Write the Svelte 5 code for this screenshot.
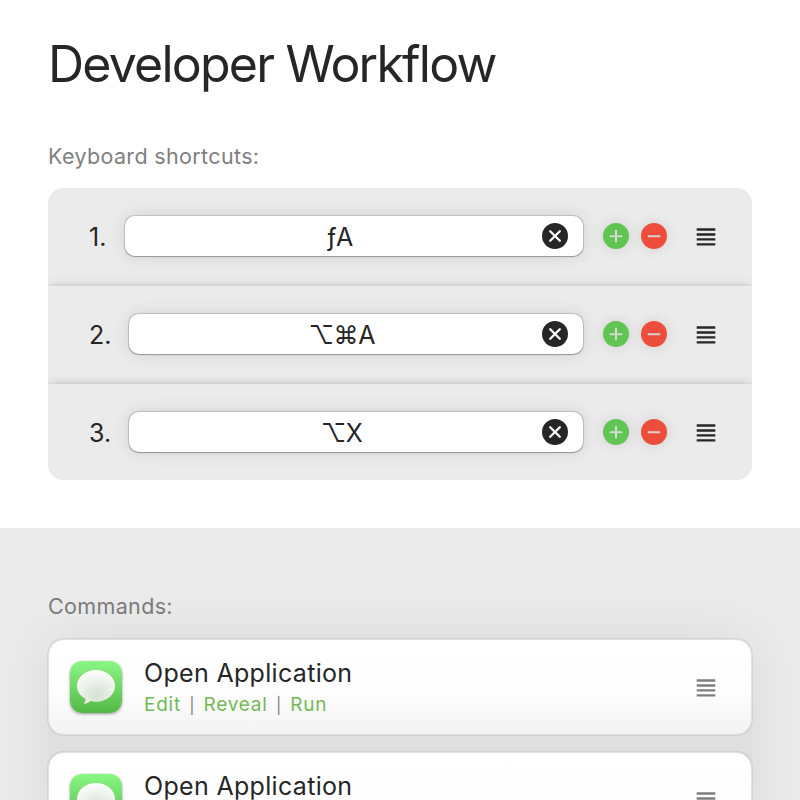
<script>
  const shortcuts = [
    { id: 1, keys: 'ƒA' },
    { id: 2, keys: '⌥⌘A' },
    { id: 3, keys: '⌥X' },
  ];
  const commands = ['Open Application', 'Open Application'];
</script>

{#snippet grip()}
  <svg class="grip" viewBox="0 0 20 20" width="20" height="20" aria-hidden="true">
    <path d="M.7 2.500h18.600M.7 7.500h18.600M.7 12.400h18.600M.7 17.300h18.600" stroke="currentColor" stroke-width="2.300" />
  </svg>
{/snippet}

<main>
  <section class="top">
    <h1>Developer Workflow</h1>
    <h2>Keyboard shortcuts:</h2>
    <div class="shortcuts">
      {#each shortcuts as s (s.id)}
        <div class="row">
          <span class="num">{s.id}.</span>
          <div class="field">
            <span class="keys">{s.keys}</span>
            <button class="clear" aria-label="Clear">
              <svg viewBox="0 0 26 26" width="26" height="26">
                <path d="M8.2 8.2l9.6 9.6M17.8 8.2l-9.6 9.6" stroke="#fff" stroke-width="2.3" stroke-linecap="round" />
              </svg>
            </button>
          </div>
          <button class="round add" aria-label="Add">
            <svg viewBox="0 0 26 26" width="26" height="26">
              <path d="M13 7.800v10.800M7.600 13.200h10.800" stroke="#d0dccd" stroke-width="2.1" stroke-linecap="round" />
            </svg>
          </button>
          <button class="round remove" aria-label="Remove">
            <svg viewBox="0 0 26 26" width="26" height="26">
              <path d="M7.600 13.200h10.800" stroke="#dcd0cd" stroke-width="2.1" stroke-linecap="round" />
            </svg>
          </button>
          <span class="handle">{@render grip()}</span>
        </div>
      {/each}
    </div>
  </section>

  <section class="bottom">
    <h2>Commands:</h2>
    <div class="cards">
      {#each commands as name, i}
        <article class="card">
          <svg class="app" viewBox="0 0 52 52" width="52" height="52" aria-hidden="true">
            <defs>
              <linearGradient id="tile{i}" x1="0" y1="0" x2="0" y2="1">
                <stop offset="0" stop-color="#8af785" />
                <stop offset="1" stop-color="#54b848" />
              </linearGradient>
              <radialGradient id="bubble{i}" cx="0.53" cy="0.74" r="0.74">
                <stop offset="0" stop-color="#d6e0d3" />
                <stop offset="0.5" stop-color="#e9efe7" />
                <stop offset="1" stop-color="#fdfefd" />
              </radialGradient>
            </defs>
            <rect width="52" height="52" rx="11.5" fill="url(#tile{i})" />
            <path
              d="M26 9C15.500 9 7 16 7 25c0 5.400 3.400 10.100 8.500 13-.1 2.200-.7 3.900-1.900 5 2.800-.2 5.100-1.200 6.900-2.900 1.800.5 3.600.7 5.500.7 10.500 0 19-7 19-15.800S36.500 9 26 9z"
              fill="url(#bubble{i})"
            />
          </svg>
          <div class="info">
            <h3>{name}</h3>
            <nav>
              <a href="#edit">Edit</a><i>|</i><a href="#reveal">Reveal</a><i>|</i><a href="#run">Run</a>
            </nav>
          </div>
          {@render grip()}
        </article>
      {/each}
    </div>
  </section>
</main>

<style>
  :global(body) {
    margin: 0;
    overflow: hidden;
  }
  main {
    height: 800px;
    overflow: hidden;
    display: flex;
    flex-direction: column;
    background: #fff;
    color: #262626;
    font-family: Inter, 'Liberation Sans', sans-serif;
  }
  h1, h2, h3 {
    margin: 0;
    font-weight: 400;
  }
  h1 {
    font-size: 50px;
    line-height: 60px;
    letter-spacing: -1.780px;
  }
  h2 {
    font-size: 21.5px;
    line-height: 28px;
    letter-spacing: 0.35px;
    color: #808080;
  }
  button {
    border: 0;
    padding: 0;
    border-radius: 50%;
    width: 26px;
    height: 26px;
  }
  svg {
    display: block;
    flex: none;
    fill: none;
  }
  .top {
    box-sizing: border-box;
    height: 528px;
    flex: none;
    padding: 34px 48px 48px;
  }
  .top h2 {
    margin-top: 48px;
    margin-bottom: 18px;
  }
  .shortcuts {
    display: flex;
    flex-direction: column;
    gap: 2px;
    background: #e4e4e4;
    border-radius: 16px;
    overflow: hidden;
  }
  .row {
    box-sizing: border-box;
    height: 96px;
    display: flex;
    align-items: center;
    padding: 0 36px 0 41px;
    background: #ebebeb;
  }
  .row + .row {
    box-shadow: 0 -4px 10px -3px rgba(0, 0, 0, 0.13);
  }
  .num {
    font-size: 25px;
    line-height: 30px;
    margin-right: 18px;
    padding-top: 2px;
  }
  .row:first-child .num {
    margin-right: 19px;
  }
  .field {
    flex: 1;
    box-sizing: border-box;
    height: 40px;
    display: flex;
    align-items: center;
    padding: 0 15px 0 12px;
    border-radius: 10px;
    background: #fff;
    box-shadow: 0 0 1px 0.5px rgba(0, 0, 0, 0.15), 0 1px 1px rgba(0, 0, 0, 0.22), 0 0 18px rgba(0, 0, 0, 0.11);
  }
  .keys {
    flex: 1;
    padding-top: 2px;
    text-align: center;
    font-size: 25px;
    line-height: 30px;
    letter-spacing: -0.5px;
  }
  .clear {
    background: #262626;
  }
  .round {
    box-shadow: 0 0 14px rgba(0, 0, 0, 0.12);
  }
  .add {
    margin-left: 20px;
    background: #61c554;
  }
  .remove {
    margin-left: 12px;
    background: #ed4e3b;
  }
  .handle {
    margin-left: 29px;
    padding-top: 2px;
  }
  .bottom {
    flex: 1;
    padding: 64px 48px 0;
    background: #ebebeb;
  }
  .cards {
    display: flex;
    flex-direction: column;
    gap: 17px;
    margin-top: 19px;
    border-radius: 16px;
    background: #dfdfdf;
    box-shadow: 0 0 60px rgba(0, 0, 0, 0.08);
  }
  .bottom h2 {
    position: relative;
    color: #7b7b7b;
  }
  .card {
    box-sizing: border-box;
    height: 96px;
    flex: none;
    display: flex;
    align-items: center;
    padding: 0 35px 0 21px;
    border: 1px solid #e2e2e2;
    border-radius: 16px;
    background: linear-gradient(#fff, #fdfdfd 55%, #f3f3f3);
    box-shadow: 0 0 1px 0.5px rgba(0, 0, 0, 0.07);
    color: #807d7e;
  }
  .card .grip {
    margin-top: 2px;
  }
  .app {
    border-radius: 12px;
    box-shadow: 0 1px 3px rgba(0, 0, 0, 0.4);
  }
  .info {
    flex: 1;
    margin-left: 22px;
    padding-top: 3px;
  }
  h3 {
    font-size: 25px;
    line-height: 32px;
    letter-spacing: 0.32px;
    color: #262626;
  }
  nav {
    display: flex;
    font-size: 19px;
    line-height: 32px;
    letter-spacing: 0.78px;
  }
  a {
    color: #74b957;
    text-decoration: none;
  }
  i {
    font-style: normal;
    font-size: 16px;
    width: 22.5px;
    text-align: center;
    color: #808080;
  }
</style>
